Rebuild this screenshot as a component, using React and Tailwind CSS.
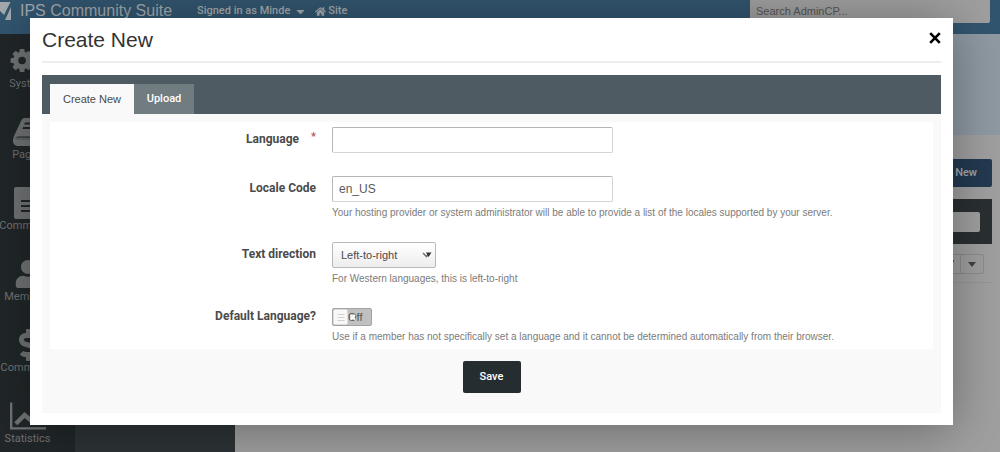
import React, { useState } from 'react';
import { FaUser, FaHome, FaCaretDown, FaDollarSign, FaPencilAlt } from 'react-icons/fa';

const GearsIcon = ({ className }) => (
  <svg viewBox="0 0 36 26" className={className} fill="currentColor">
    {[0, 45, 90, 135].map((angle) => (
      <rect key={angle} x="9.6" y="1" width="5" height="23" rx="1" transform={`rotate(${angle} 12.1 12.5)`} />
    ))}
    <circle cx="12.1" cy="12.5" r="9" />
    <circle cx="12.1" cy="12.5" r="3.8" fill="#212729" />
    <circle cx="30" cy="6" r="4" />
    <circle cx="30" cy="20" r="4" />
  </svg>
);

const BookIcon = ({ className }) => (
  <svg viewBox="0 0 30 28" className={className} fill="currentColor">
    <path d="M12 0H28Q30.500 0 30 2L25 17Q24.500 18.500 23 18.500H5Q3 18.500 2.500 20Q2.500 22 5 22H25L29 10V14L25 26Q24.500 28 22.500 28H4Q0 27 0 23Q0 20.500 1 18L8.500 2Q9.500 0 12 0Z" />
    <path d="M12 4.500H25L24.400 6.500H11.200ZM10.200 9H23.500L23 11H9.400Z" fill="#212729" />
    <path d="M3 19.500H25L24 23.500H5Q2 22.500 3 19.500Z" opacity=".8" />
  </svg>
);

const PageIcon = ({ className }) => (
  <svg viewBox="0 0 27 32" className={className} fill="currentColor">
    <path d="M2 0H16V9Q16 11 18 11H27V30Q27 32 25 32H2Q0 32 0 30V2Q0 0 2 0Z" />
    <path d="M18 0L27 9H18Z" />
    <path d="M7 13H20V15H7ZM7 18H20V20H7ZM7 23H20V25H7Z" fill="#212729" />
  </svg>
);

const ChartIcon = ({ className }) => (
  <svg viewBox="0 0 37 28" className={className} fill="none" stroke="currentColor">
    <path d="M1.2 0V26.8H37" strokeWidth="2.4" />
    <path d="M6 22L15 13L21 18L30 8" strokeWidth="4.6" />
    <path d="M25 3H34V12Z" fill="currentColor" stroke="none" />
  </svg>
);

const LogoIcon = ({ className }) => (
  <svg viewBox="0 0 12 18" className={className} fill="currentColor">
    <path d="M0 0H10.5L4 13L0 9Z" />
    <path d="M11 5V18H5Z" />
  </svg>
);

const apps = [
  { name: 'System', icon: GearsIcon, size: 'h-[26px] w-9' },
  { name: 'Pages', icon: BookIcon, size: 'h-7 w-[30px]' },
  { name: 'Community', icon: PageIcon, size: 'h-8 w-[27px]' },
  { name: 'Members', icon: FaUser, size: 'h-7 w-[26px]' },
  { name: 'Commerce', icon: FaDollarSign, size: 'h-8 w-5' },
  { name: 'Statistics', icon: ChartIcon, size: 'h-7 w-9' },
];

function AdminPage() {
  return (
    <div className="flex min-h-screen flex-col bg-[#a0a0a0]">
      <header className="flex h-[34px] items-start bg-[#32556f] text-[#a3a9ad]">
        <LogoIcon className="mt-0.5 h-[18px] w-3 shrink-0" />
        <span className="ml-2 w-[177px] shrink-0 text-base leading-[22px]">IPS Community Suite</span>
        <button type="button" className="flex items-center gap-1 font-[Roboto,sans-serif] text-[11px] leading-[22px] font-medium">
          Signed in as Minde
          <FaCaretDown size={13} />
        </button>
        <a href="#site" className="ml-2 flex items-center gap-0.5 font-[Roboto,sans-serif] text-[11px] leading-[22px] font-medium">
          <FaHome size={11} />
          Site
        </a>
        <input
          type="search"
          aria-label="Search AdminCP"
          placeholder="Search AdminCP..."
          className="mr-2.5 ml-auto h-[23px] w-60 rounded-b-xs bg-[#9f9f9f] px-1.5 pb-0.5 text-[11px] placeholder:text-[#565656]"
        />
      </header>
      <div className="flex flex-1">
        <nav className="w-[75px] shrink-0 bg-[#212729] pt-[11px] text-[#727577]">
          {apps.map(({ name, icon: Icon, size }) => (
            <a
              key={name}
              href={'#' + name}
              className="flex h-[71px] w-[55px] flex-col items-center font-[Roboto,sans-serif] text-[11px] leading-[14px] last:h-12"
            >
              <span className="flex h-8 items-center">
                <Icon className={size} />
              </span>
              {name}
            </a>
          ))}
        </nav>
        <div className="w-40 shrink-0 bg-[#2d3336]" />
        <main className="flex-1">
          <div className="h-[101px] bg-[#8f9aa3]" />
          <div className="flex flex-col pt-6 pr-2">
            <button
              type="button"
              className="h-7 self-end rounded-xs bg-[#233a50] px-[15px] font-[Roboto,sans-serif] text-[11px] font-medium text-[#a5abb0]"
            >
              Create New
            </button>
            <div className="mt-3 flex h-[45px] items-center justify-end bg-[#2a3032] pr-3">
              <input type="text" aria-label="Filter" className="h-5 w-40 rounded-xs bg-[#a0a0a0]" />
            </div>
            <div className="mt-2.5 flex justify-end border-b border-[#969696] pr-2 pb-2">
              <button
                type="button"
                aria-label="Edit"
                className="flex h-5 w-6 items-center justify-center rounded-l-xs border border-r-0 border-[#8d8d8d] text-[#424242]"
              >
                <FaPencilAlt size={10} />
              </button>
              <button
                type="button"
                aria-label="More actions"
                className="flex h-5 w-6 items-center justify-center rounded-r-xs border border-[#8d8d8d] text-[#424242]"
              >
                <svg viewBox="0 0 8 5" className="h-[5px] w-2" fill="currentColor">
                  <path d="M0 0H8L4 5Z" />
                </svg>
              </button>
            </div>
          </div>
        </main>
      </div>
    </div>
  );
}

function FormRow({ label, id, required, help, labelPad = 'pt-1', children }) {
  return (
    <div className="flex items-start gap-4">
      <label
        htmlFor={id}
        className={`flex w-[266px] shrink-0 justify-end font-[Roboto,sans-serif] text-xs leading-4 font-bold text-[#4a4a4a] ${labelPad}`}
      >
        {label}
        {required && <span className="ml-3 text-[11px] leading-3 text-[#c0544c]">*</span>}
      </label>
      <div className="min-w-0">
        {children}
        {help && <p className="mt-0.5 text-[10px] leading-[17px] text-[#7b7b7b]">{help}</p>}
      </div>
    </div>
  );
}

export default function App() {
  const [tab, setTab] = useState('create');
  const [isDefault, setIsDefault] = useState(false);

  const active = 'bg-[#f9f9f9] text-[#4a4a4a]';
  const inactive = 'bg-[#717c80] font-[Roboto,sans-serif] font-medium text-white';

  return (
    <div className="relative overflow-hidden font-['Liberation_Sans',Arial,sans-serif]">
      <AdminPage />
      <div className="absolute inset-0 pt-[18px] pr-[47px] pl-[30px]">
        <section
          role="dialog"
          aria-labelledby="dialog-title"
          className="bg-white px-3 pb-3 shadow-[0_5px_50px_rgba(0,0,0,0.35)]"
        >
          <div className="flex h-[45px] items-center justify-between border-b-2 border-[#ededed]">
            <h1 id="dialog-title" className="text-[21px] leading-6 text-[#333333]">
              Create New
            </h1>
            <button type="button" aria-label="Close" className="pb-1 text-black">
              <svg viewBox="0 0 12 12" className="h-3 w-3" stroke="currentColor" strokeWidth="2.6">
                <path d="M1.2 1.2L10.8 10.8M10.8 1.2L1.2 10.8" />
              </svg>
            </button>
          </div>

          <div role="tablist" className="mt-3 flex h-[39px] items-end bg-[#4e5b62] px-2">
            <button
              type="button"
              role="tab"
              aria-selected={tab === 'create'}
              onClick={() => setTab('create')}
              className={`h-[30px] w-[84px] text-[11px] ${tab === 'create' ? active : inactive}`}
            >
              Create New
            </button>
            <button
              type="button"
              role="tab"
              aria-selected={tab === 'upload'}
              onClick={() => setTab('upload')}
              className={`h-[30px] w-[60px] text-[11px] ${tab === 'upload' ? active : inactive}`}
            >
              Upload
            </button>
          </div>

          <form className="bg-[#f9f9f9] px-2 pt-2" onSubmit={(e) => e.preventDefault()}>
            <div className="bg-white pt-[5px] pb-1">
              <FormRow label="Language" id="language" required>
                <input
                  id="language"
                  type="text"
                  className="block h-[26px] w-[281px] rounded-xs border border-[#d4d4d4] border-t-[#b5b5b5] border-l-[#b5b5b5] px-1.5 text-xs text-[#5a5a5a]"
                />
              </FormRow>
              <div className="mt-[23px]">
                <FormRow
                  label="Locale Code"
                  id="locale"
                  help="Your hosting provider or system administrator will be able to provide a list of the locales supported by your server."
                >
                  <input
                    id="locale"
                    type="text"
                    defaultValue="en_US"
                    className="block h-[26px] w-[281px] rounded-xs border border-[#d4d4d4] border-t-[#b5b5b5] border-l-[#b5b5b5] px-1.5 text-xs text-[#5a5a5a]"
                  />
                </FormRow>
              </div>
              <div className="mt-[21px]">
                <FormRow label="Text direction" id="direction" help="For Western languages, this is left-to-right">
                  <div className="relative w-[104px]">
                    <select
                      id="direction"
                      className="block h-[26px] w-full appearance-none rounded-xs border border-[#b9b9b9] bg-linear-to-b from-white to-[#ededed] pl-2 text-[11px] text-[#4a4a4a]"
                    >
                      <option>Left-to-right</option>
                      <option>Right-to-left</option>
                    </select>
                    <svg viewBox="0 0 10 6" className="pointer-events-none absolute top-2.5 right-1 h-1.5 w-2.5">
                      <path d="M1 1L4.500 4.500L7 2" fill="none" stroke="#777777" strokeWidth="1.6" />
                      <path d="M4 .5H9.500L6.500 5Z" fill="#333333" />
                    </svg>
                  </div>
                </FormRow>
              </div>
              <div className="mt-[21px]">
                <FormRow
                  label="Default Language?"
                  id="is-default"
                  labelPad="pt-0"
                  help="Use if a member has not specifically set a language and it cannot be determined automatically from their browser."
                >
                  <div className="relative h-[18px] w-10">
                    <input
                      id="is-default"
                      type="checkbox"
                      checked={isDefault}
                      onChange={(e) => setIsDefault(e.target.checked)}
                      className="block h-full w-full appearance-none rounded-xs border border-[#a2a2a2] bg-[#c0c0c0]"
                    />
                    <span className="pointer-events-none absolute inset-0 pl-4 text-[11px] leading-[18px] text-[#555555]">
                      {isDefault ? 'On' : 'Off'}
                    </span>
                    <svg viewBox="0 0 24 18" className="pointer-events-none absolute top-0 left-0 h-[18px] w-6">
                      <rect x="1.5" y="1.5" width="14" height="15" rx="1.5" fill="#f8f8f8" />
                      <path d="M5.500 6.500H12.500M5.500 9.500H12.500M5.500 12.500H12.500" stroke="#d0d0d0" />
                      <path d="M18.500 7L23 11.500M23 7L18.500 11.500" stroke="#ffffff" strokeWidth="2" />
                    </svg>
                  </div>
                </FormRow>
              </div>
            </div>
            <div className="flex h-16 items-start justify-center pt-3">
              <button
                type="submit"
                className="h-8 w-[58px] rounded-xs bg-[#262d31] font-[Roboto,sans-serif] text-[11px] font-medium text-white"
              >
                Save
              </button>
            </div>
          </form>
        </section>
      </div>
    </div>
  );
}
